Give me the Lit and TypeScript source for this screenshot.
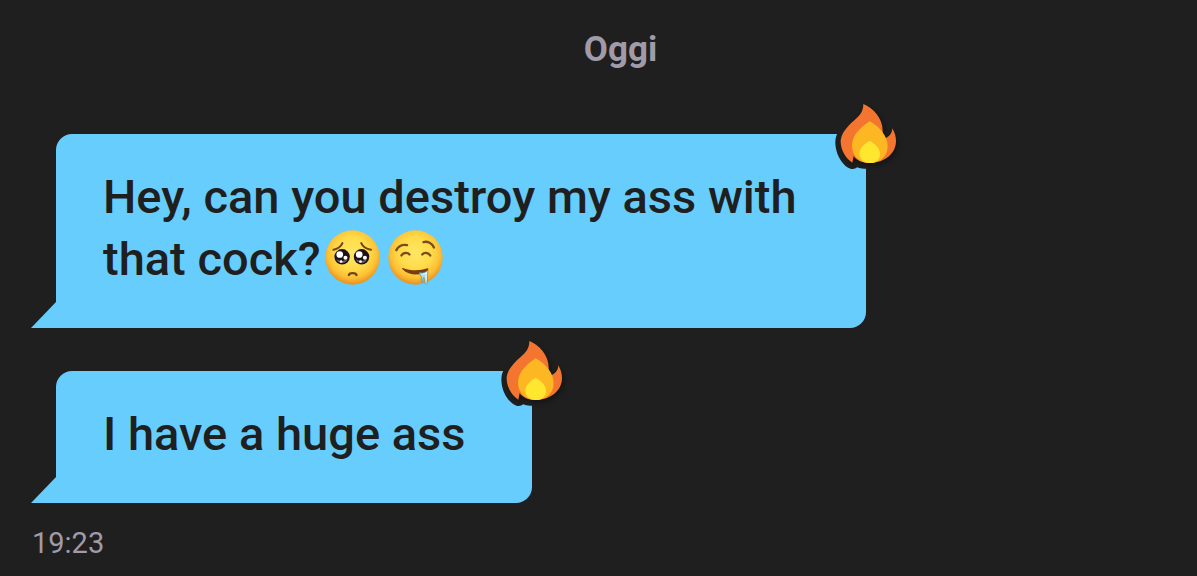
import { LitElement, html, css, svg } from "lit";
import { customElement, property } from "lit/decorators.js";

const flamePath =
  "M130 42 C160 54 190 86 188 126 C188 134 190 141 193 146 C207 142 217 130 217 115 C231 139 232 166 218 186 C205 206 180 218 150 219 C128 219 110 212 101 198 L97 218 C76 204 61 178 62 151 C66 117 101 94 117 77 C127 66 130 55 130 42Z";

@customElement("flame-badge")
class FlameBadge extends LitElement {
  static styles = css`
    :host {
      display: block;
      width: 70px;
      height: 70px;
    }
    svg {
      display: block;
      overflow: visible;
    }
    .glow {
      filter: drop-shadow(6px 8px 8px rgba(0, 0, 0, 0.35));
    }
  `;
  render() {
    return html`<svg width="70" height="70" viewBox="36 30 210 210" role="img" aria-label="Fire reaction">
      <path
        d="M62 116 C48 130 44 150 47 170 C51 202 73 232 94 237 C102 238 107 235 111 232 C135 240 170 237 190 226 L150 110Z"
        fill="#1f1f1f"
      />
      <path class="glow" d=${flamePath} fill="#f4752f" />
      <path
        d="M149 94 C168 104 203 132 203 168 C203 200 180 219 149 219 C117 219 95 196 96 165 C97 132 128 108 149 94Z"
        fill="#fcb722"
      />
      <path
        d="M149 152 C161 159 180 172 180 191 C180 209 167 219 149 219 C132 219 118 208 118 190 C119 172 137 159 149 152Z"
        fill="#ffe72f"
      />
    </svg>`;
  }
}

const faceFill = (id: string) => svg`
  <defs>
    <radialGradient id=${id} cx="0.5" cy="0.42" r="0.59">
      <stop offset="0" stop-color="#ffe765" />
      <stop offset="0.5" stop-color="#ffdb49" />
      <stop offset="0.76" stop-color="#fdc236" />
      <stop offset="1" stop-color="#e98b1b" />
    </radialGradient>
  </defs>
  <circle cx="82" cy="82" r="81" fill="url(#${id})" />`;

@customElement("emoji-face")
class EmojiFace extends LitElement {
  @property() kind = "pleading";

  static styles = css`
    :host {
      display: block;
      width: 55px;
      height: 55px;
    }
    svg {
      display: block;
    }
  `;

  private pleading() {
    return html`<svg width="55" height="55" viewBox="0 0 164 164" role="img" aria-label="Pleading face">
      ${faceFill("pleading-skin")}
      <g fill="none" stroke="#704416" stroke-width="6" stroke-linecap="round">
        <path d="M25 59 C36 57 47 50 52 39" />
        <path d="M108 39 C113 50 125 57 137 59" />
        <path d="M71 134 C74 127 91 127 94 134" stroke-width="7" />
      </g>
      <g fill="#1c1218">
        <circle cx="51" cy="80" r="23" />
        <circle cx="109" cy="80" r="23" />
      </g>
      <g fill="#75625f">
        <path d="M34 87 A18 18 0 0 0 67 88 Q50 97 34 87Z" />
        <path d="M92 87 A18 18 0 0 0 125 88 Q108 97 92 87Z" />
      </g>
      <g fill="#fff">
        <circle cx="44" cy="73" r="10" />
        <circle cx="61" cy="83" r="6" />
        <circle cx="48" cy="94" r="4" />
        <circle cx="102" cy="73" r="10" />
        <circle cx="119" cy="83" r="6" />
        <circle cx="106" cy="94" r="4" />
      </g>
    </svg>`;
  }

  private drooling() {
    return html`<svg width="55" height="55" viewBox="0 0 164 164" role="img" aria-label="Drooling face">
      ${faceFill("drooling-skin")}
      <g fill="none" stroke="#7d4c16" stroke-width="7" stroke-linecap="round">
        <path d="M25 60 C31 48 44 43 57 45" />
        <path d="M106 36 C118 32 132 40 137 52" />
        <path d="M40 76 C44 67 58 66 64 73" />
        <path d="M102 73 C108 66 121 67 126 76" />
      </g>
      <path d="M44 113 C67 122 96 122 118 114 C121 114 121 118 119 121 C100 138 62 137 44 118 C41 115 42 113 44 113Z" fill="#7b3c12" />
      <path
        d="M94 127 C103 130 113 126 119 120 L117 157 C117 163 110 163 110 157 L110 145 C108 140 105 141 104 146 L103 157 C98 157 99 149 100 140 C97 137 94 133 94 127Z"
        fill="#a9e0ee"
        stroke="#538f9b"
        stroke-width="2"
      />
      <path d="M103 132 Q110 132 114 128 L113 151" fill="none" stroke="#effcff" stroke-width="3" />
    </svg>`;
  }

  render() {
    return this.kind === "drooling" ? this.drooling() : this.pleading();
  }
}

@customElement("chat-bubble")
class ChatBubble extends LitElement {
  static styles = css`
    :host {
      display: block;
      position: relative;
      box-sizing: border-box;
      width: fit-content;
      max-width: 810px;
      padding: 32px 67px 38px 47px;
      border-radius: 16px 0 16px 0;
      background: #66cdfd;
      color: #1f1f1f;
      font-size: 47px;
      font-weight: 500;
      line-height: 62px;
    }
    .tail {
      position: absolute;
      right: 100%;
      bottom: 0;
      width: 25px;
      height: 26px;
      background: #66cdfd;
      clip-path: polygon(100% 0, 100% 100%, 0 100%);
    }
    .reaction {
      position: absolute;
      top: -34px;
      right: -36px;
    }
  `;
  render() {
    return html`<slot></slot><span class="tail"></span><flame-badge class="reaction"></flame-badge>`;
  }
}

@customElement("app-root")
class AppRoot extends LitElement {
  static styles = css`
    :host {
      display: block;
      box-sizing: border-box;
      min-height: 100vh;
      padding: 26px 0 8px;
      background: #1f1f1f;
      font-family: Roboto, "Liberation Sans", sans-serif;
    }
    .day {
      margin: 0;
      padding-left: 44px;
      color: #9f9ba8;
      font-size: 35px;
      font-weight: 700;
      line-height: 48px;
      text-align: center;
    }
    .messages {
      display: flex;
      flex-direction: column;
      gap: 43px;
      padding: 60px 44px 0 56px;
    }
    .faces {
      display: inline-flex;
      gap: 8px;
      height: 55px;
      margin: -4px 0;
      padding-left: 4px;
      vertical-align: -10px;
    }
    .time {
      display: block;
      padding: 20px 32px 0;
      color: #9f9ba8;
      font-size: 29px;
      font-weight: 400;
      line-height: 40px;
    }
  `;
  render() {
    return html`
      <h1 class="day">Oggi</h1>
      <main class="messages">
        <chat-bubble
          >Hey, can you destroy my ass with that cock?<span class="faces"
            ><emoji-face kind="pleading"></emoji-face><emoji-face kind="drooling"></emoji-face></span
        ></chat-bubble>
        <chat-bubble>I have a huge ass</chat-bubble>
      </main>
      <time class="time" datetime="19:23">19:23</time>
    `;
  }
}
